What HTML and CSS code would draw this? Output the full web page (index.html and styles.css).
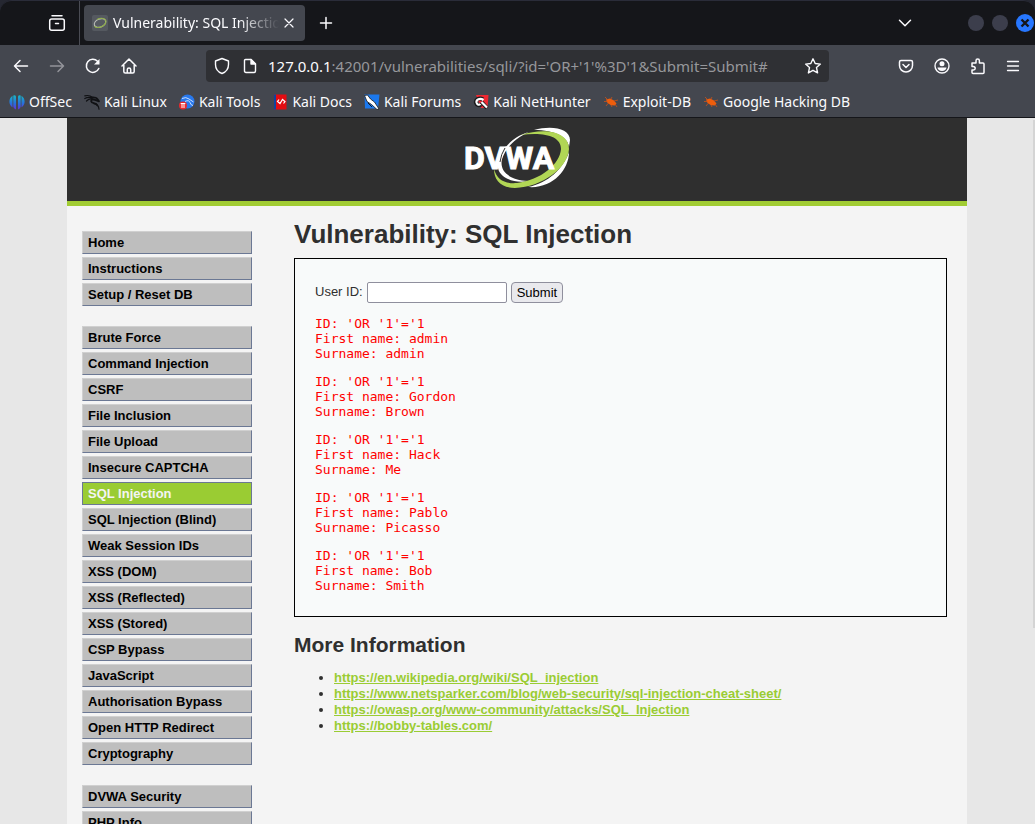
FILE: index.html
```html
<!DOCTYPE html>
<html lang="en">
<head>
<meta charset="utf-8">
<title>Vulnerability: SQL Injection</title>
<link rel="stylesheet" href="styles.css">
</head>
<body>
<div class="window">
  <header class="browser">
    <div class="tabstrip">
      <button class="icon-btn overview" aria-label="Tab overview"><svg width="18" height="18" viewBox="0 0 18 18" fill="none" stroke="#fbfbfe" stroke-width="1.5" stroke-linecap="round"><rect x="1.700" y="5" width="14.600" height="11.200" rx="2"/><path d="M4 1.700h10M7.500 9.500h3"/></svg></button>
      <div class="tab">
        <span class="favicon"><svg width="16" height="16" viewBox="0 0 16 16" fill="none"><ellipse cx="8" cy="8" rx="6" ry="4" transform="rotate(-22 8 8)" stroke="#c0c2c0" stroke-width="1"/><path d="M5 4.500C9 2.500 14 3 14 6.500c0 3-4 5.500-7.500 6-2 .2-3.500-.5-4-1.500" stroke="#8fae48" stroke-width="1.100"/></svg></span>
        <span class="tab-title">Vulnerability: SQL Injection</span>
        <button class="icon-btn" aria-label="Close tab"><svg width="10" height="10" viewBox="0 0 10 10" stroke="#fbfbfe" stroke-width="1.200" stroke-linecap="round"><path d="M1 1l8 8M9 1l-8 8"/></svg></button>
      </div>
      <button class="icon-btn new-tab" aria-label="New tab"><svg width="14" height="14" viewBox="0 0 14 14" stroke="#fbfbfe" stroke-width="1.500" stroke-linecap="round"><path d="M7 1.500v11M1.500 7h11"/></svg></button>
      <button class="icon-btn list-tabs" aria-label="List all tabs"><svg width="14" height="8" viewBox="0 0 14 8" fill="none" stroke="#fbfbfe" stroke-width="1.500" stroke-linecap="round" stroke-linejoin="round"><path d="M1.500 1.200L7 6.700l5.500-5.500"/></svg></button>
      <div class="controls">
        <button class="control" aria-label="Minimize"></button>
        <button class="control" aria-label="Maximize"></button>
        <button class="control close" aria-label="Close"><svg width="10" height="10" viewBox="0 0 10 10" stroke="#15161a" stroke-width="2.400"><path d="M1.500 1.500l7 7M8.500 1.500l-7 7"/></svg></button>
      </div>
    </div>
    <div class="navbar">
      <div class="nav-buttons">
        <button class="icon-btn" aria-label="Back"><svg width="16" height="16" viewBox="0 0 16 16" fill="none" stroke="#fbfbfe" stroke-width="1.500" stroke-linecap="round" stroke-linejoin="round"><path d="M14.500 8H1.500M7 2.500L1.500 8 7 13.500"/></svg></button>
        <button class="icon-btn" aria-label="Forward" disabled><svg width="16" height="16" viewBox="0 0 16 16" fill="none" stroke="#93949a" stroke-width="1.500" stroke-linecap="round" stroke-linejoin="round"><path d="M1.500 8h13M9 2.500L14.500 8 9 13.500"/></svg></button>
        <button class="icon-btn" aria-label="Reload"><svg width="16" height="16" viewBox="0 0 16 16" fill="none" stroke="#fbfbfe" stroke-width="1.500" stroke-linecap="round"><path d="M13.800 10.500A6.500 6.500 0 1 1 12.500 3.300l1 1"/><path d="M14.500 1v5.500H9z" fill="#fbfbfe" stroke="none"/></svg></button>
        <button class="icon-btn" aria-label="Home"><svg width="16" height="16" viewBox="0 0 16 16" fill="none" stroke="#fbfbfe" stroke-width="1.500" stroke-linecap="round" stroke-linejoin="round"><path d="M1 8l7-7 7 7M2.800 7v6.500q0 1.500 1.500 1.500h7.400q1.500 0 1.500-1.500V7M6.300 15v-3.500q0-1.500 1.700-1.500t1.700 1.500V15"/></svg></button>
      </div>
      <div class="urlbar">
        <svg width="16" height="18" viewBox="0 0 16 18" fill="none" stroke="#fbfbfe" stroke-width="1.400" stroke-linejoin="round"><path d="M8 1.500L14.500 4v3.500c0 4.500-2.500 7.500-6.500 9-4-1.500-6.500-4.500-6.500-9V4z"/></svg>
        <svg width="14" height="16" viewBox="0 0 14 16" fill="none" stroke="#fbfbfe" stroke-width="1.400" stroke-linejoin="round"><path d="M2.500 1.500H8l4.500 4.500v7q0 1.500-1.500 1.500H3q-1.500 0-1.500-1.500V2.500q0-1 1-1z"/><path d="M8 1.500V6h4.500z" fill="#fbfbfe"/></svg>
        <div class="url"><span class="host">127.0.0.1</span>:42001/vulnerabilities/sqli/?id='OR+'1'%3D'1&amp;Submit=Submit#</div>
        <button class="icon-btn" aria-label="Bookmark this page"><svg width="18" height="18" viewBox="0 0 18 18" fill="none" stroke="#fbfbfe" stroke-width="1.400" stroke-linejoin="round"><path d="M9 1.800l2.200 4.700 5.200.6-3.900 3.500 1.100 5.300L9 13.300l-4.600 2.600 1.100-5.300L1.600 7.100l5.200-.6z"/></svg></button>
      </div>
      <div class="tools">
        <button class="icon-btn" aria-label="Pocket"><svg width="16" height="16" viewBox="0 0 16 16" fill="none" stroke="#fbfbfe" stroke-width="1.500" stroke-linecap="round" stroke-linejoin="round"><path d="M3 2.500h10q1.500 0 1.500 1.500v3.500a6.500 6.500 0 0 1-13 0V4q0-1.500 1.500-1.500zM5 6.500l3 3 3-3"/></svg></button>
        <button class="icon-btn" aria-label="Account"><svg width="16" height="16" viewBox="0 0 16 16"><circle cx="8" cy="8" r="7" fill="none" stroke="#fbfbfe" stroke-width="1.400"/><circle cx="8" cy="5.800" r="2.500" fill="#fbfbfe"/><path d="M3.500 9.500h9c0 1.800-2 3.500-4.500 3.500s-4.500-1.700-4.500-3.500z" fill="#fbfbfe"/></svg></button>
        <button class="icon-btn" aria-label="Extensions"><svg width="16" height="18" viewBox="0 0 16 18" fill="none" stroke="#fbfbfe" stroke-width="1.500" stroke-linejoin="round"><path d="M2 6h4V3.700a1.700 1.700 0 0 1 3.400 0V6H13q1 0 1 1v8.500q0 1-1 1H3q-1 0-1-1V13h1.500a1.700 1.700 0 0 0 0-3.400H2z"/></svg></button>
        <button class="icon-btn" aria-label="Menu"><svg width="14" height="14" viewBox="0 0 14 14" stroke="#fbfbfe" stroke-width="1.300" stroke-linecap="round"><path d="M1.500 2.500h11M1.500 7h11M1.500 11.500h11"/></svg></button>
      </div>
    </div>
    <nav class="bookmarks" aria-label="Bookmarks">
      <a href="#"><svg width="16" height="16" viewBox="0 0 16 16"><defs><linearGradient id="os" gradientUnits="userSpaceOnUse" x1="0" y1="1" x2="0" y2="15"><stop offset="0" stop-color="#17b8c4"/><stop offset=".6" stop-color="#2870dc"/><stop offset="1" stop-color="#6035d8"/></linearGradient></defs><path d="M3.500 1.800v11.500C-.8 10.500-.5 4.500 3.500 1.800zM12.500 1.800v11.500C16.800 10.500 16.500 4.500 12.500 1.800zM4.300 1.500Q7 .3 7 3v12.500Q4.300 14.500 4.300 12.500zM11.700 1.500Q9 .3 9 3v12.500Q11.700 14.500 11.700 12.500z" fill="url(#os)"/></svg>OffSec</a>
      <a href="#"><svg width="16" height="16" viewBox="0 0 16 16" fill="none" stroke="#101114" stroke-linecap="round" stroke-linejoin="round"><path d="M.8 1.800q5-1 7.500 1.500M.8 4.500q3.500-1.800 7.500-.5M2.500 7q2.500-2.500 5.500-2" stroke-width="1.200"/><path d="M7 3.500q5-.5 6 1l2 2.800-4-1.500q-4-1-3.800 1.500c.3 2.500 5 1 6 4" stroke-width="1.800"/><path d="M10 9.700q4.500.5 5 5.500" stroke-width="1.200"/></svg>Kali Linux</a>
      <a href="#"><svg width="16" height="16" viewBox="0 0 16 16"><circle cx="8.500" cy="7.500" r="7" fill="#2878ed"/><path d="M3 4.500q4-2 7 .5l4.500 3M6 7.500q4-2 5 1t3 3" stroke="#dceaff" stroke-width=".9" fill="none"/><circle cx="4" cy="11.500" r="4" fill="#e9292e"/><path d="M1.700 9.500h4.600M3 9.500V14M5 9.500V14" stroke="#fff" stroke-width="1"/></svg>Kali Tools</a>
      <a href="#"><svg width="16" height="16" viewBox="0 0 16 16"><path d="M2 .500h12.500v15H2z" fill="#e30c12"/><path d="M2 .500h2v15H2z" fill="#12429d"/><path d="M7 5.500L5.500 7.500 8 9.500l2.500-4L13 7.500l-1.500 2" stroke="#fff" stroke-width="1.200" fill="none"/></svg>Kali Docs</a>
      <a href="#"><svg width="16" height="16" viewBox="0 0 16 16"><path d="M.5.500h15L14 14.500H1z" fill="#1b78ed"/><path d="M.5 1.500l3-.5 3 4 4 3 4.500 7-2 .5-5.500-5-4.500-3z" fill="#fff" stroke="#151719" stroke-width=".8"/><path d="M4 9l4 4" stroke="#151719"/></svg>Kali Forums</a>
      <a href="#"><svg width="16" height="16" viewBox="0 0 16 16"><path d="M3 1h12.500l-1 13H8z" fill="#ef2832"/><path d="M10 5.500C6.500 3 2 5.500 3 9c.8 2.500 3 2.800 5 1.500M8.500 8l5.500 6" stroke="#191a1c" stroke-width="4" fill="none"/><path d="M10.500 6C7 3.500 3 5.500 3.500 8.500c.8 2.500 2.500 2.800 4 1.500M8.500 8l5.500 5.500" stroke="#fff" stroke-width="2.200" fill="none"/></svg>Kali NetHunter</a>
      <a href="#"><svg width="16" height="16" viewBox="0 0 16 16"><path d="M3 5.500l4-1 4 2 2.500 3-1.500 2-4-.3-3.500-2.200z" fill="#ee5d0c"/><path d="M2 3l2.500 2.500M8 5l1-2M11 7l4-1M1 7.500h3.500M5 9.500L3 12M8 11l1 2M12 10l2 3" stroke="#c9521a" stroke-width=".8"/></svg>Exploit-DB</a>
      <a href="#"><svg width="16" height="16" viewBox="0 0 16 16"><path d="M3 5.500l4-1 4 2 2.500 3-1.500 2-4-.3-3.500-2.200z" fill="#ee5d0c"/><path d="M2 3l2.500 2.500M8 5l1-2M11 7l4-1M1 7.500h3.500M5 9.500L3 12M8 11l1 2M12 10l2 3" stroke="#c9521a" stroke-width=".8"/></svg>Google Hacking DB</a>
    </nav>
  </header>
  <div class="viewport">
    <div class="page">
      <div class="banner">
        <svg class="logo" width="110" height="64" viewBox="0 0 110 64" role="img" aria-label="DVWA">
          <path d="M67 6C53 12 43 23 40 33C37 46 48 54 66 55C50 58 34 50 36 38C38 25 49 11 67 6Z" fill="#fff"/>
          <path d="M72 4C89 -1 108 2 108 14L107 21C106 11 93 4 72 4Z" fill="#fff"/>
          <path d="M107 26C107 44 90 63 66 61C86 57 101 43 107 26Z" fill="#fff"/>
          <path d="M59 9C84 1 107 6 107 23C106 42 80 61 53 62C39 62 32 54 32 43C35 54 43 58 55 57C79 54 98 38 99 23C99 10 82 6 59 9Z" fill="#b1d655"/>
          <text x="2" y="43" class="logo-text">DVWA</text>
          <path d="M43 22Q39 28 38 36" fill="none" stroke="#2f2f2f" stroke-width="1"/>
        </svg>
      </div>
      <div class="columns">
        <nav class="menu" aria-label="Main menu">
          <ul><li><a href="#">Home</a></li><li><a href="#">Instructions</a></li><li><a href="#">Setup / Reset DB</a></li></ul>
          <ul><li><a href="#">Brute Force</a></li><li><a href="#">Command Injection</a></li><li><a href="#">CSRF</a></li><li><a href="#">File Inclusion</a></li><li><a href="#">File Upload</a></li><li><a href="#">Insecure CAPTCHA</a></li><li><a href="#" class="selected">SQL Injection</a></li><li><a href="#">SQL Injection (Blind)</a></li><li><a href="#">Weak Session IDs</a></li><li><a href="#">XSS (DOM)</a></li><li><a href="#">XSS (Reflected)</a></li><li><a href="#">XSS (Stored)</a></li><li><a href="#">CSP Bypass</a></li><li><a href="#">JavaScript</a></li><li><a href="#">Authorisation Bypass</a></li><li><a href="#">Open HTTP Redirect</a></li><li><a href="#">Cryptography</a></li></ul>
          <ul><li><a href="#">DVWA Security</a></li><li><a href="#">PHP Info</a></li></ul>
        </nav>
        <main class="content">
          <h1>Vulnerability: SQL Injection</h1>
          <section class="results">
            <form>
              <label for="uid">User ID:</label>
              <input type="text" id="uid" name="id">
              <button type="submit">Submit</button>
            </form>
<pre>ID: 'OR '1'='1
First name: admin
Surname: admin</pre>
<pre>ID: 'OR '1'='1
First name: Gordon
Surname: Brown</pre>
<pre>ID: 'OR '1'='1
First name: Hack
Surname: Me</pre>
<pre>ID: 'OR '1'='1
First name: Pablo
Surname: Picasso</pre>
<pre>ID: 'OR '1'='1
First name: Bob
Surname: Smith</pre>
          </section>
          <h2>More Information</h2>
          <ul class="links">
            <li><a href="#">https://en.wikipedia.org/wiki/SQL_injection</a></li>
            <li><a href="#">https://www.netsparker.com/blog/web-security/sql-injection-cheat-sheet/</a></li>
            <li><a href="#">https://owasp.org/www-community/attacks/SQL_Injection</a></li>
            <li><a href="#">https://bobby-tables.com/</a></li>
          </ul>
        </main>
      </div>
    </div>
    <div class="scrollbar"></div>
  </div>
</div>
</body>
</html>
```

FILE: styles.css
```css
* { box-sizing: border-box; }
body { margin: 0; background: #252731; }
.window { display: flex; flex-direction: column; height: 100vh; overflow: hidden; }
button { font: inherit; }
svg { display: block; flex: none; }

.browser { flex: none; font: 14px/20px "Noto Sans", sans-serif; color: #fbfbfe; background: linear-gradient(#15161a 45px, #44474f 45px); border-bottom: 1px solid #15161a; border-radius: 12px 12px 0 0; }
.icon-btn { display: flex; align-items: center; justify-content: center; padding: 0; border: 0; background: none; }
.tabstrip { display: flex; align-items: center; height: 45px; border-top: 1px solid #2a2c39; border-radius: 12px 12px 0 0; }
.overview { width: 80px; height: 44px; padding-left: 34px; border-right: 1px solid #4a4c54; }
.tab { display: flex; align-items: center; width: 221px; height: 36px; margin-left: 4px; padding: 0 11px 0 8px; border-radius: 4px; background: #44474f; }
.favicon { background: #555960; border-radius: 2px; }
.tab-title { flex: 1; margin: 0 5px; overflow: hidden; white-space: nowrap; mask-image: linear-gradient(to left, transparent, #000 40px); }
.new-tab { margin-left: 14px; }
.list-tabs { margin-left: auto; }
.controls { display: flex; align-items: center; gap: 8px; margin: 0 1px 0 56px; }
.control { display: flex; align-items: center; justify-content: center; width: 16px; height: 16px; padding: 0; border: 0; border-radius: 50%; background: #3c3e4c; }
.close { width: 18px; height: 18px; background: #2777ff; }

.navbar { display: flex; align-items: center; height: 42px; padding: 0 15px 0 13px; }
.nav-buttons { display: flex; gap: 20px; }
.urlbar { display: flex; align-items: center; flex: 1; height: 32px; margin: 0 69px; padding: 0 7px 0 8px; border-radius: 4px; background: #2f3034; }
.urlbar svg + svg { margin: 0 11px 0 13px; }
.url { flex: 1; color: #96979b; font-size: 15px; white-space: nowrap; overflow: hidden; }
.host { color: #fbfbfe; }
.tools { display: flex; align-items: center; gap: 20px; }

.bookmarks { display: flex; gap: 12px; height: 30px; padding-left: 9px; white-space: nowrap; }
.bookmarks a { display: flex; align-items: center; gap: 4px; color: inherit; text-decoration: none; }

.viewport { position: relative; flex: 1; min-height: 0; overflow: hidden; padding-right: 1px; background: #e7e7e7; font: 13px/15px "Liberation Sans", Arial, sans-serif; color: #2f2f2f; }
.scrollbar { position: absolute; top: 2px; right: 0; width: 2px; height: 72%; background: #d4d4d4; }
.page { max-width: 900px; min-height: 100%; margin: 0 auto; background: #f4f4f4; }
.banner { display: flex; justify-content: center; padding: 8px 0 11px; background: #2f2f2f; border-bottom: 5px solid #a1cc33; }
.logo-text { font: bold 32px Roboto, sans-serif; fill: #fff; stroke: #fff; stroke-width: 1px; }
.columns { display: flex; align-items: flex-start; gap: 42px; padding: 13px 20px 20px 15px; }

.menu { display: flex; flex-direction: column; gap: 20px; flex: none; width: 170px; padding-top: 12px; }
.menu ul { display: flex; flex-direction: column; gap: 3px; margin: 0; padding: 0; list-style: none; }
.menu a { display: block; height: 23px; padding: 3px 5px; border: 1px solid; border-color: #d0d0d0 #6b7894 #6b7894 #d0d0d0; background: #bebebe; color: #000; font-weight: bold; text-decoration: none; }
.menu .selected { background: #9acc33; color: #f4f4f4; border-color: #6b7894; }

.content { flex: 1; min-width: 0; }
h1 { margin: 0 0 8px; font-size: 26px; line-height: 31px; }
.results { padding: 23px 20px; background: #f8fafa; border: 1px solid #000; }
form { display: flex; align-items: center; gap: 4px; height: 21px; }
form input { width: 140px; height: 21px; padding: 1px 2px; border: 1px solid #8f8f9d; border-radius: 2px; background: #fff; font: inherit; }
form label { padding-bottom: 2px; }
form button { height: 21px; padding: 0 5px; border: 1px solid #8f8f9d; border-radius: 4px; background: #e9e9ed; color: #000; }
pre { margin: 13px 0 0; font: 13px/15px "DejaVu Sans Mono", monospace; color: #f00; }
h2 { margin: 16px 0 13px; font-size: 21px; line-height: 24px; }
.links { margin: 0; padding-left: 40px; line-height: 16px; }
.links a { color: #9acc33; font-weight: bold; }
```
